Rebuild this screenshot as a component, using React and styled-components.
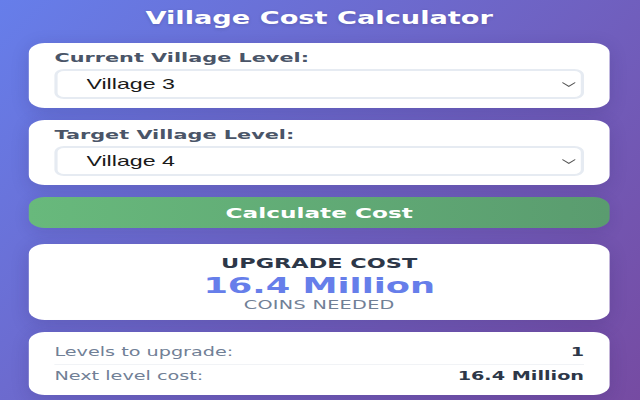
import React, { useState } from 'react';
import styled, { createGlobalStyle } from 'styled-components';

const GlobalStyle = createGlobalStyle`
    html, body {
        margin:0;
        padding:0;
        width:640px;
        height:400px;
        overflow:hidden;
        background:linear-gradient(135deg, #667eea 0%, #764ba2 100%);
        font-family:"DejaVu Sans", Verdana, sans-serif;
    }
`;

// the popup is laid out at 400px and shown stretched across the 640px window
const Popup = styled.div`
    width:400px;
    box-sizing:border-box;
    padding:0 19px 0 18px;
    transform:scaleX(1.6);
    transform-origin:0 0;
    display:flex;
    flex-direction:column;
`;

const Title = styled.h1`
    margin:8px 0 15px;
    font-size:17px;
    line-height:20px;
    font-weight:700;
    color:white;
    text-align:center;
    text-shadow:0 1px 3px rgba(0,0,0,0.15);
`;

const Card = styled.div`
    background:white;
    border-radius:10px;
    box-shadow:0 4px 14px rgba(40,30,90,0.18);
    padding:${p => p.$pad || '8px 16px 9px'};
    margin-bottom:${p => p.$gap || 12}px;
    display:flex;
    flex-direction:column;
    text-align:${p => p.$center ? 'center' : 'left'};
`;

const Label = styled.label`
    font-size:13px;
    line-height:14px;
    font-weight:700;
    color:#4a5568;
    margin-bottom:4px;
`;

const SelectWrap = styled.div`
    position:relative;
    display:flex;
`;

const Select = styled.select`
    appearance:none;
    width:100%;
    height:30px;
    box-sizing:border-box;
    padding:0 18px;
    border:2px solid #e6ebf2;
    border-radius:6px;
    background:white;
    font-family:"Liberation Sans", Arial, sans-serif;
    font-size:14.5px;
    color:#1a1a1a;
    outline:none;
`;

const Chevron = styled.svg`
    position:absolute;
    right:5px;
    top:13px;
    pointer-events:none;
`;

const Button = styled.button`
    height:31px;
    margin:0 0 16px;
    border:none;
    border-radius:10px;
    background:linear-gradient(90deg, #68b97c 0%, #5a9c6f 100%);
    box-shadow:0 4px 12px rgba(40,30,90,0.15);
    color:white;
    font-family:"DejaVu Sans", Verdana, sans-serif;
    font-size:14.5px;
    font-weight:700;
    cursor:pointer;
`;

const CostTitle = styled.div`
    font-size:14px;
    line-height:18px;
    font-weight:700;
    color:#2d3748;
`;

const CostValue = styled.div`
    margin-top:2px;
    font-size:22px;
    line-height:24px;
    font-weight:700;
    color:#667eea;
`;

const CostUnit = styled.div`
    margin-top:1px;
    font-size:12px;
    line-height:12px;
    letter-spacing:0.2px;
    color:#718096;
`;

const Row = styled.div`
    display:flex;
    justify-content:space-between;
    align-items:center;
    padding:4px 0;
    line-height:15px;
    font-size:12px;
    border-bottom:${p => p.$last ? 'none' : '1px solid #f1f3f6'};
`;

const RowLabel = styled.span`
    color:#718096;
`;

const RowValue = styled.span`
    color:#2d3748;
    font-weight:700;
`;

// upgrade cost (coins) to reach each village level
const costs = {
    2: 8.2,
    3: 12.1,
    4: 16.4,
    5: 21.9,
    6: 28.5,
    7: 36.0,
    8: 44.8,
};

const levels = [1, 2, 3, 4, 5, 6, 7, 8];

const Dropdown = ({ value, onChange }) => <SelectWrap>
    <Select value={value} onChange={(e) => onChange(Number(e.target.value))}>
        {levels.map(l => <option key={l} value={l}>Village {l}</option>)}
    </Select>
    <Chevron width="9" height="5" viewBox="0 0 9 5">
        <path d="M0.5 0.5 L4.5 4.3 L8.5 0.5" fill="none" stroke="#555" strokeWidth="0.9" />
    </Chevron>
</SelectWrap>

const fmt = (n) => `${n.toFixed(1)} Million`;

const App = () => {
    const [current, setCurrent] = useState(3);
    const [target, setTarget] = useState(4);
    const [result, setResult] = useState({ total: 16.4, count: 1, next: 16.4 });

    const calculate = () => {
        let total = 0;
        for (let l = current + 1; l <= target; l++) total += costs[l] || 0;
        setResult({
            total,
            count: Math.max(target - current, 0),
            next: costs[current + 1] || 0,
        });
    };

    return <>
        <GlobalStyle />
        <Popup>
            <Title>Village Cost Calculator</Title>
            <Card>
                <Label>Current Village Level:</Label>
                <Dropdown value={current} onChange={setCurrent} />
            </Card>
            <Card>
                <Label>Target Village Level:</Label>
                <Dropdown value={target} onChange={setTarget} />
            </Card>
            <Button onClick={calculate}>Calculate Cost</Button>
            <Card $center $pad="10px 16px 9px">
                <CostTitle>UPGRADE COST</CostTitle>
                <CostValue>{fmt(result.total)}</CostValue>
                <CostUnit>COINS NEEDED</CostUnit>
            </Card>
            <Card $pad="9px 16px 7px" $gap={0}>
                <Row>
                    <RowLabel>Levels to upgrade:</RowLabel>
                    <RowValue>{result.count}</RowValue>
                </Row>
                <Row $last>
                    <RowLabel>Next level cost:</RowLabel>
                    <RowValue>{fmt(result.next)}</RowValue>
                </Row>
            </Card>
        </Popup>
    </>
}

export default App;
